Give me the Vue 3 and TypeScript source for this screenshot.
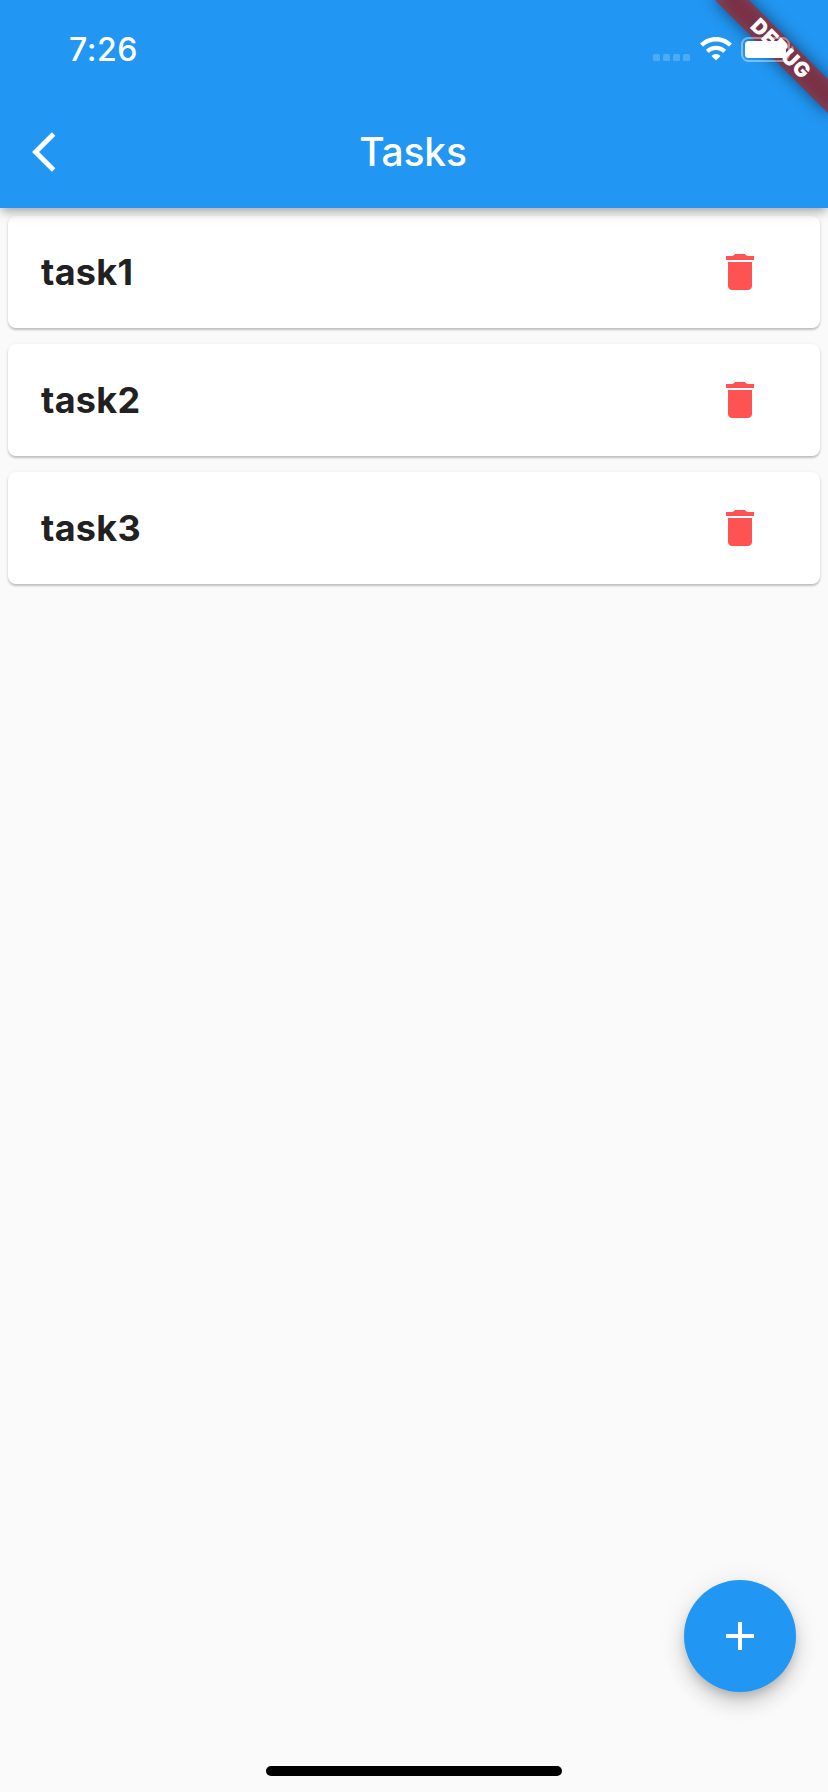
<script setup lang="ts">
import { ref } from 'vue'

interface Task {
  id: number
  name: string
}

const tasks = ref<Task[]>([
  { id: 1, name: 'task1' },
  { id: 2, name: 'task2' },
  { id: 3, name: 'task3' },
])

function removeTask(id: number): void {
  tasks.value = tasks.value.filter((t) => t.id !== id)
}

function addTask(): void {
  const id = tasks.value.reduce((max, t) => Math.max(max, t.id), 0) + 1
  tasks.value.push({ id, name: `task${id}` })
}
</script>

<template>
  <div class="screen">
    <header class="app-bar">
      <div class="banner"><span>DEBUG</span></div>
      <div class="status">
        <span class="time">7:26</span>
        <div class="indicators">
          <div class="signal"><i v-for="n in 4" :key="n" /></div>
          <svg class="wifi" width="32" height="24" viewBox="0 0 32 24">
            <path d="M16 0C22.1 0 27.600 2.400 31.600 6.300Q32 6.700 31.600 7.100L29.400 9.300Q29 9.700 28.500 9.300C25.200 6.300 20.800 4.600 16 4.600S6.800 6.300 3.500 9.300Q3 9.700 2.600 9.300L.4 7.100Q0 6.700.4 6.300C4.400 2.400 9.900 0 16 0Z" />
            <path d="M16 8.700C19.800 8.700 23.200 10.100 25.800 12.500Q26.200 12.900 25.800 13.300L23.600 15.500Q23.200 15.900 22.700 15.500C20.900 13.900 18.600 13 16 13S11.100 13.900 9.300 15.500Q8.800 15.900 8.400 15.500L6.200 13.300Q5.800 12.900 6.200 12.500C8.800 10.100 12.200 8.700 16 8.700Z" />
            <path d="M16 17C17.700 17 19.100 17.600 20.100 18.500Q20.600 18.900 20.100 19.400L16.400 23.100Q16 23.500 15.600 23.100L11.900 19.400Q11.400 18.900 11.900 18.500C12.900 17.600 14.300 17 16 17Z" />
          </svg>
          <svg class="battery" width="54" height="26" viewBox="0 0 54 26">
            <rect x="1" y="1" width="47" height="23" rx="6.500" fill="none" stroke="#fff" stroke-opacity=".4" stroke-width="2" />
            <rect x="4" y="4" width="41" height="17" rx="3.500" />
            <path d="M50.500 8.500C52 9.100 53 10.600 53 12.500S52 15.900 50.500 16.500Z" fill-opacity=".4" />
          </svg>
        </div>
      </div>
      <div class="toolbar">
        <button class="back" aria-label="Back">
          <svg width="48" height="48" viewBox="0 0 24 24"><path d="M11.670 3.870 9.900 2.100 0 12l9.900 9.900 1.770-1.770L3.540 12z" /></svg>
        </button>
        <h1>Tasks</h1>
      </div>
    </header>

    <main class="list">
      <article v-for="task in tasks" :key="task.id" class="card">
        <span class="name">{{ task.name }}</span>
        <button class="delete" aria-label="Delete" @click="removeTask(task.id)">
          <svg width="48" height="48" viewBox="0 0 24 24"><path d="M6 19c0 1.100.9 2 2 2h8c1.100 0 2-.9 2-2V7H6v12zM19 4h-3.500l-1-1h-5l-1 1H5v2h14V4z" /></svg>
        </button>
      </article>
    </main>

    <footer class="bottom">
      <button class="fab" aria-label="Add" @click="addTask">
        <svg width="48" height="48" viewBox="0 0 24 24"><path d="M19 13h-6v6h-2v-6H5v-2h6V5h2v6h6v2z" /></svg>
      </button>
      <div class="home" />
    </footer>
  </div>
</template>

<style>
html,
body {
  margin: 0;
  background: #fafafa;
}
</style>

<style scoped>
.screen {
  position: relative;
  display: flex;
  flex-direction: column;
  width: 828px;
  height: 1792px;
  overflow: hidden;
  background: #fafafa;
  font-family: Inter, 'Liberation Sans', sans-serif;
}

button {
  display: block;
  padding: 0;
  border: 0;
  background: none;
}

svg {
  display: block;
  fill: #fff;
}

.app-bar {
  position: relative;
  z-index: 1;
  height: 208px;
  flex: none;
  background: #2196f3;
  color: #fff;
  box-shadow: 0 4px 8px -2px rgba(0, 0, 0, 0.18), 0 6px 10px -1px rgba(0, 0, 0, 0.14), 0 2px 18px 0 rgba(0, 0, 0, 0.08);
}

.status {
  position: relative;
  display: flex;
  justify-content: space-between;
  height: 96px;
  padding: 0 33px 0 69px;
  box-sizing: border-box;
}

.time {
  margin-top: 30px;
  font-size: 32px;
  line-height: 39px;
  font-weight: 500;
  letter-spacing: 0.5px;
}

.indicators {
  display: flex;
  align-items: flex-start;
  padding-top: 37px;
}

.signal {
  display: flex;
  gap: 3px;
  margin: 17px 10px 0 0;
}

.signal i {
  width: 7px;
  height: 7px;
  border-radius: 1.500px;
  background: rgba(255, 255, 255, 0.2);
}

.wifi {
  margin-right: 9px;
}

.toolbar {
  display: grid;
  grid-template-columns: 112px 1fr 112px;
  align-items: center;
  height: 112px;
}

.back {
  margin-left: 32px;
}

h1 {
  margin: 0 2px 0 0;
  text-align: center;
  font-size: 39px;
  line-height: 48px;
  font-weight: 500;
  letter-spacing: -0.2px;
}

/* Corner ribbon, laid over the app bar */
.banner {
  position: absolute;
  top: 0;
  left: 828px;
  width: 0;
  height: 0;
  transform: rotate(45deg);
}

.banner::before,
.banner::after {
  content: '';
  position: absolute;
  left: -80px;
  top: 56px;
  width: 160px;
  height: 24px;
}

.banner::before {
  background: rgba(0, 0, 0, 0.5);
  filter: blur(7.900px);
}

.banner::after {
  background: rgba(183, 28, 28, 0.627);
}

.banner span {
  position: absolute;
  z-index: 1;
  left: -79px;
  top: 56px;
  width: 160px;
  text-align: center;
  font-size: 20.800px;
  line-height: 24px;
  font-weight: 900;
  letter-spacing: 0.5px;
  color: #fff;
}

.list {
  display: flex;
  flex-direction: column;
  gap: 16px;
  padding: 8px;
}

.card {
  display: flex;
  align-items: center;
  justify-content: space-between;
  height: 112px;
  box-sizing: border-box;
  padding: 0 56px 0 33px;
  border-radius: 8px;
  background: #fff;
  box-shadow: 0 2px 2px 0 rgba(0, 0, 0, 0.19), 0 1px 4px 0 rgba(0, 0, 0, 0.08);
}

.name {
  font-size: 36px;
  line-height: 44px;
  font-weight: 650;
  letter-spacing: 0.3px;
  color: #212121;
}

.delete svg {
  fill: #ff5252;
}

.bottom {
  display: flex;
  flex-direction: column;
  margin-top: auto;
  padding-bottom: 16px;
}

.fab {
  display: flex;
  align-items: center;
  justify-content: center;
  align-self: flex-end;
  width: 112px;
  height: 112px;
  margin: 0 32px 74px 0;
  border-radius: 50%;
  background: #2196f3;
  box-shadow: 0 6px 10px -2px rgba(0, 0, 0, 0.16), 0 12px 20px 0 rgba(0, 0, 0, 0.14), 0 2px 30px 0 rgba(0, 0, 0, 0.07);
}

.home {
  align-self: center;
  width: 296px;
  height: 10px;
  border-radius: 5px;
  background: #000;
}
</style>
